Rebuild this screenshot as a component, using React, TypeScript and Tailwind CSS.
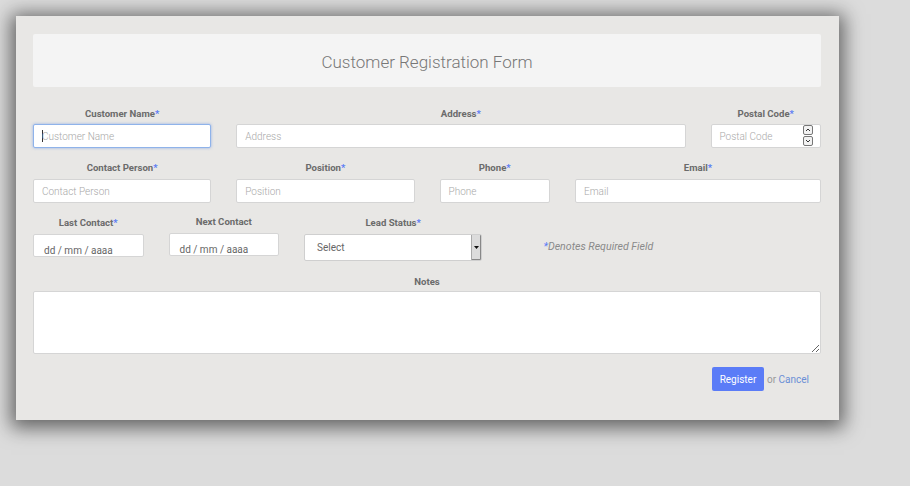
import React from "react";

const Star = () => <span className="text-[#5b7cf5]">*</span>;

function Label({ text, req = true }: { text: string; req?: boolean }) {
  return (
    <div className="text-center text-[9.6px] font-bold leading-[14px] text-[#6b6b6b]">
      {text}
      {req && <Star />}
    </div>
  );
}

function Box({
  placeholder,
  focused = false,
  children,
}: {
  placeholder?: string;
  focused?: boolean;
  children?: React.ReactNode;
}) {
  return (
    <div
      className={
        focused
          ? "relative flex h-[24px] items-center rounded-[2px] border border-[#8fb3ea] bg-white pl-[8px] shadow-[0_0_3px_rgba(90,140,230,0.6)]"
          : "relative flex h-[24px] items-center rounded-[2px] border border-[#d5d5d5] bg-white pl-[8px]"
      }
    >
      {focused && <span className="mr-[-1px] inline-block h-[12px] w-px bg-[#333]" />}
      <span className="text-[10px] font-light text-[#a8a8a8]">{placeholder}</span>
      {children}
    </div>
  );
}

function DateBox() {
  return (
    <div className="flex h-[23px] items-end overflow-hidden rounded-[2px] border border-[#d5d5d5] bg-white pl-[10px]">
      <span className="translate-y-[1px] text-[10px] leading-[13px] text-[#666]">dd / mm / aaaa</span>
    </div>
  );
}

export default function App() {
  return (
    <div
      className="h-[486px] w-[910px] bg-[#dcdcdc] p-[16px]"
      style={{ fontFamily: "Roboto, 'Liberation Sans', sans-serif" }}
    >
      <div className="w-[823px] bg-[#e8e7e5] pb-[29px] pl-[17px] pr-[18px] pt-[18px] shadow-[0_3px_18px_5px_rgba(0,0,0,0.55)]">
        <div className="flex h-[53px] items-center justify-center rounded-[2px] bg-[#f4f4f4] pt-[4px]">
          <h1 className="text-[17px] font-light text-[#777]">Customer Registration Form</h1>
        </div>

        {/* Row 1 */}
        <div className="mt-[20px] grid grid-cols-12 gap-x-[25px]">
          <div className="col-span-3 flex flex-col gap-[3px]">
            <Label text="Customer Name" />
            <Box placeholder="Customer Name" focused />
          </div>
          <div className="col-span-7 flex flex-col gap-[3px]">
            <Label text="Address" />
            <Box placeholder="Address" />
          </div>
          <div className="col-span-2 flex flex-col gap-[3px]">
            <Label text="Postal Code" />
            <Box placeholder="Postal Code">
              <div className="absolute right-[7px] top-[0px] flex flex-col gap-px">
                <div className="flex h-[10px] w-[10px] items-center justify-center rounded-[2px] border border-[#777] bg-[#f2f2f2]">
                  <svg width="6" height="4" viewBox="0 0 6 4">
                    <path d="M1 3 L3 1 L5 3" fill="none" stroke="#333" strokeWidth="1" />
                  </svg>
                </div>
                <div className="flex h-[10px] w-[10px] items-center justify-center rounded-[2px] border border-[#777] bg-[#f2f2f2]">
                  <svg width="6" height="4" viewBox="0 0 6 4">
                    <path d="M1 1 L3 3 L5 1" fill="none" stroke="#333" strokeWidth="1" />
                  </svg>
                </div>
              </div>
            </Box>
          </div>
        </div>

        {/* Row 2 */}
        <div className="mt-[13px] grid grid-cols-12 gap-x-[25px]">
          <div className="col-span-3 flex flex-col gap-[4px]">
            <Label text="Contact Person" />
            <Box placeholder="Contact Person" />
          </div>
          <div className="col-span-3 flex flex-col gap-[4px]">
            <Label text="Position" />
            <Box placeholder="Position" />
          </div>
          <div className="col-span-2 flex flex-col gap-[4px]">
            <Label text="Phone" />
            <Box placeholder="Phone" />
          </div>
          <div className="col-span-4 flex flex-col gap-[4px]">
            <Label text="Email" />
            <Box placeholder="Email" />
          </div>
        </div>

        {/* Row 3 */}
        <div className="mt-[13px] grid grid-cols-12 items-start gap-x-[25px]">
          <div className="col-span-2 flex flex-col gap-[4px]">
            <Label text="Last Contact" />
            <DateBox />
          </div>
          <div className="col-span-2 -mt-px flex flex-col gap-[4px]">
            <Label text="Next Contact" req={false} />
            <DateBox />
          </div>
          <div className="col-span-3 flex flex-col gap-[4px]">
            <Label text="Lead Status" />
            <div className="flex h-[27px] overflow-hidden rounded-[2px] border border-[#cfcfcf] bg-white">
              <div className="flex flex-1 items-center pl-[12px] text-[10px] text-[#666]">Select</div>
              <div className="flex w-[10px] items-center justify-center border-l border-[#aaa] bg-[#dcdcdc] shadow-[inset_-1px_-1px_0_#888]">
                <svg width="5" height="3" viewBox="0 0 5 3">
                  <path d="M0 0 L5 0 L2.5 3 Z" fill="#111" />
                </svg>
              </div>
            </div>
          </div>
          <div className="col-span-3 flex h-[46px] items-end justify-center pb-[7px] pl-[4px]">
            <span className="text-[10.6px] italic text-[#8a8a8a]">
              <Star />
              Denotes Required Field
            </span>
          </div>
        </div>

        {/* Notes */}
        <div className="mt-[13px] flex flex-col gap-[2px]">
          <Label text="Notes" req={false} />
          <textarea
            readOnly
            className="h-[63px] w-full rounded-[2px] border border-[#d5d5d5] bg-white outline-none"
          />
        </div>

        <div className="mt-[13px] flex items-center justify-end pr-[12px]">
          <button className="h-[24px] w-[52px] rounded-[2px] bg-[#5b7cf7] text-[10px] text-white">
            Register
          </button>
          <span className="ml-[3px] text-[10px] text-[#999]">
            or <span className="text-[#6b8fd6]">Cancel</span>
          </span>
        </div>
      </div>
    </div>
  );
}
